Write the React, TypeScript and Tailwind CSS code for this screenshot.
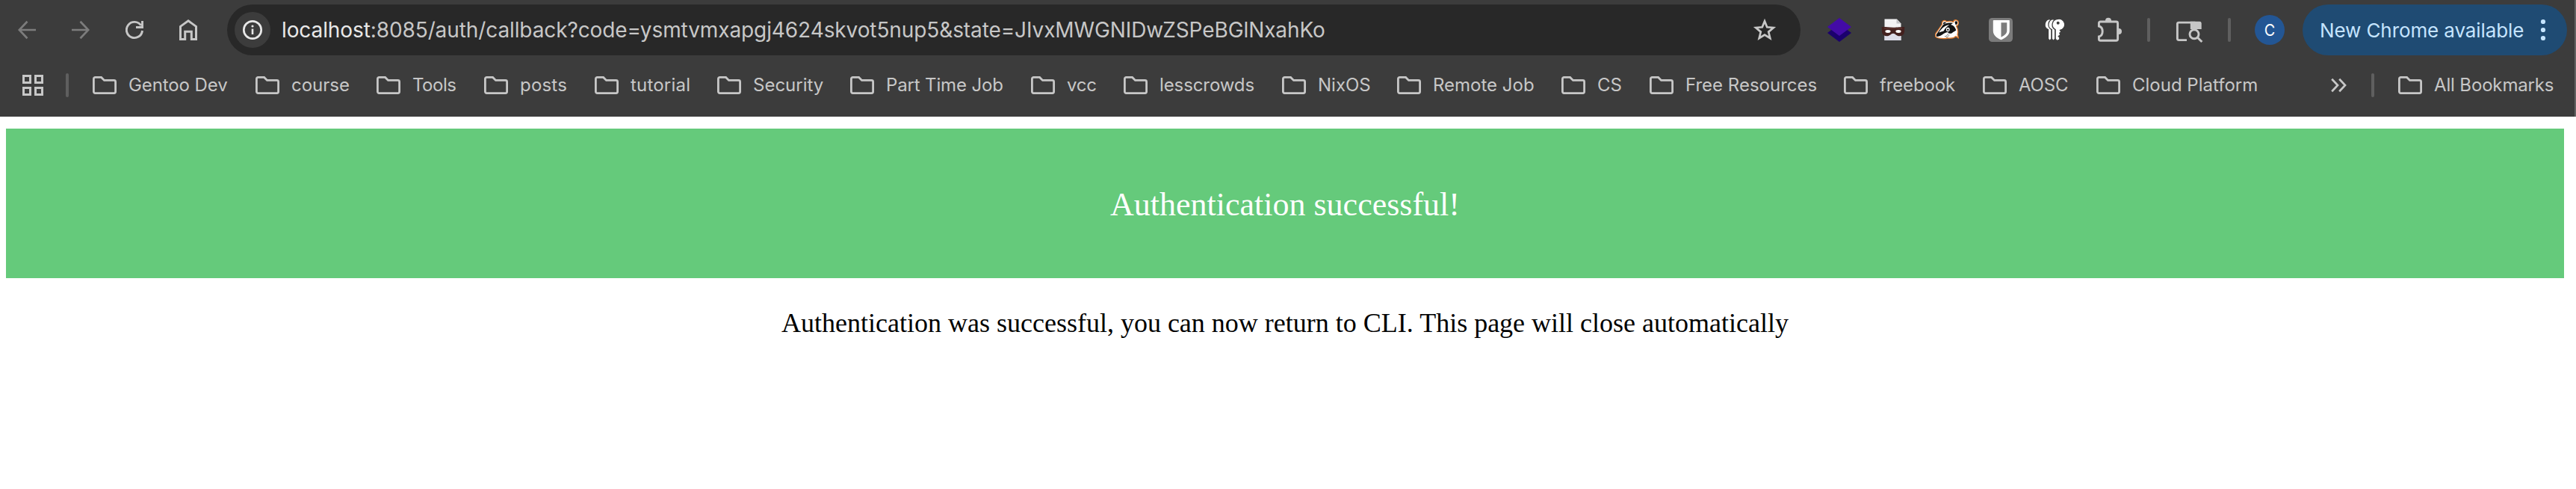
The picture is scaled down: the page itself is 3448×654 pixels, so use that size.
import type { ReactNode } from 'react'

const bookmarks = [
  { label: 'Gentoo Dev', box: 'w-[218px] tracking-[-0.1px]' },
  { label: 'course', box: 'w-[162px]' },
  { label: 'Tools', box: 'w-[144px] tracking-[-0.5px]' },
  { label: 'posts', box: 'w-[148px] tracking-[0.2px]' },
  { label: 'tutorial', box: 'w-[164px] tracking-[0.2px]' },
  { label: 'Security', box: 'w-[178px]' },
  { label: 'Part Time Job', box: 'w-[242px] tracking-[-0.15px]' },
  { label: 'vcc', box: 'w-[124px] tracking-[-0.3px]' },
  { label: 'lesscrowds', box: 'w-[212px] tracking-[-0.1px]' },
  { label: 'NixOS', box: 'w-[154px]' },
  { label: 'Remote Job', box: 'w-[220px]' },
  { label: 'CS', box: 'w-[118px]' },
  { label: 'Free Resources', box: 'w-[260px]' },
  { label: 'freebook', box: 'w-[186px] tracking-[-0.15px]' },
  { label: 'AOSC', box: 'w-[152px] tracking-[-0.2px]' },
  { label: 'Cloud Platform', box: 'w-[314px]' },
]

function Icon({ w = 32, h = 32, className = '', children }: { w?: number; h?: number; className?: string; children: ReactNode }) {
  return (
    <svg width={w} height={h} viewBox={`0 0 ${w} ${h}`} fill="none" className={`shrink-0 ${className}`}>
      {children}
    </svg>
  )
}

function Separator({ className = '' }: { className?: string }) {
  return <div className={`h-8 w-1 shrink-0 rounded-full bg-[#5f5f5f] ${className}`} />
}

function Folder() {
  return (
    <Icon w={32} h={24} className="mr-4 text-[#c7c7c7]">
      <path
        d="M1.4 3.4a2 2 0 0 1 2-2h8.2l3.9 4h13.1a2 2 0 0 1 2 2v13.2a2 2 0 0 1-2 2H3.4a2 2 0 0 1-2-2z"
        stroke="currentColor"
        strokeWidth="2.8"
      />
    </Icon>
  )
}

function Navigation() {
  return (
    <div className="flex shrink-0 items-center gap-12 text-[#c7c7c7]">
      <Icon w={24} h={32} className="text-[#7c7c7c]">
        <path d="M24 16H2M12.5 4.8 1.8 16l10.7 11.2" stroke="currentColor" strokeWidth="2.7" />
      </Icon>
      <Icon w={24} h={32} className="text-[#7c7c7c]">
        <path d="M0 16h22M11.5 4.8 22.2 16 11.5 27.2" stroke="currentColor" strokeWidth="2.7" />
      </Icon>
      <Icon w={24} h={32}>
        <path d="M22.5 17A10.6 10.6 0 1 1 20.7 10M22.5 4v8.5H14" stroke="currentColor" strokeWidth="2.9" />
      </Icon>
      <Icon w={24} h={32}>
        <path d="M1.5 28.5V11.4L12 3.8l10.5 7.6v17.1h-6.2V18.2H7.7v10.3z" stroke="currentColor" strokeWidth="3" />
      </Icon>
    </div>
  )
}

function AddressBar() {
  return (
    <div className="ml-10 flex h-[68px] w-[2106px] shrink-0 items-center rounded-full bg-[#282828] pr-8 pl-[10px]">
      <div className="flex size-12 shrink-0 items-center justify-center rounded-full bg-[#3c3c3c]">
        <Icon w={28} h={28} className="text-[#e8e8e8]">
          <circle cx="14" cy="14" r="11.7" stroke="currentColor" strokeWidth="2.7" />
          <path d="M14 12.6V20" stroke="currentColor" strokeWidth="2.6" />
          <circle cx="14" cy="9" r="1.6" fill="currentColor" />
        </Icon>
      </div>
      <div className="ml-[15px] flex-1 text-[28px] leading-10 tracking-[-0.1px] whitespace-nowrap text-[#c7c7c7]">
        <span className="text-[#e8e8e8]">localhost</span>
        :8085/auth/callback?code=ysmtvmxapgj4624skvot5nup5&amp;state=JIvxMWGNIDwZSPeBGlNxahKo
      </div>
      <Icon className="text-[#c7c7c7]">
        <path
          d="m16 4.3 3.2 8 8.6.7-6.6 5.6 2.1 8.4-7.3-4.5L8.7 27l2.1-8.4L4.2 13l8.6-.7z"
          stroke="currentColor"
          strokeWidth="2.7"
        />
      </Icon>
    </div>
  )
}

function Extensions() {
  return (
    <div className="ml-9 flex shrink-0 items-center gap-10">
      <Icon>
        <path d="M0 20 16 8l16 12-16 12z" fill="#1b016d" />
        <path d="M0 12 16 0l16 12-16 12z" fill="#430ba7" />
      </Icon>
      <Icon>
        <path d="M4.5 1.5H21L26.5 7.5V30H4.5z" fill="#f3f3f5" />
        <path d="M4.5 20h22v10h-22z" fill="#dcdce8" />
        <path d="M20.5 1.5v6h6z" fill="#c5c5c9" />
        <path d="M.5 12.2c4-.7 8 .5 15.500.5s11.500-1.200 15.500-.5c-.8 2.300 0 4.500-.6 7-.6 3.500-3.500 5.300-7.400 5-3.500-.2-4.500-3.500-7.500-3.500s-4 3.300-7.500 3.500c-3.900.3-6.800-1.500-7.400-5-.5-2.500.2-4.700-.6-7z" fill="#43211f" />
        <path d="M4 13.700c5 .6 19 .6 24 0" stroke="#6a3c38" strokeWidth="1" />
        <ellipse cx="9" cy="18" rx="3.6" ry="1.9" fill="#fff" />
        <ellipse cx="23" cy="18" rx="3.6" ry="1.9" fill="#fff" />
      </Icon>
      <Icon>
        <path
          d="M9.500 8.500C8.500 4 13 2 15.500 5c3-1 6.500-.8 9 .5C25.500 1.500 31.500 2 31.300 6.500c0 2.500-1.200 3.800-2.800 4 2 4 2.800 8 1.600 11.500l1.300 5-3.400-2.500c-2.500 2.500-7 3-11 2.500-5 1-12 .5-15-1C-.5 24.500 0 21 3 18z"
          fill="#fff"
          stroke="#e0792b"
          strokeWidth="1.3"
          strokeLinejoin="round"
        />
        <path d="M11 8.500c-.7-3 2.500-4 4-2zM26.500 5.500c1.500-2.500 4-1 3.500 1.500-.3 1.500-1.500 2.300-2.500 2z" fill="#111" />
        <path d="M10.500 9.500c4-3 9-3.500 13.500-2.500l-3 2c3.500.5 6 3 7.300 7.500-2 2-3.500 1.500-5.300 3.500-2 1.500-4.500 1-6-1-3 .5-5 1.500-7.500 3.500-2 1.500-5 2.500-7 2.500-1.500-1-1-3 .5-4.500z" fill="#141414" />
        <path d="M5 19.500c4-5.500 8-9.500 14.500-10.500-3.500 2-6 5-8 8.500-2.500.5-4.500 1.200-6.500 2z" fill="#fff" />
        <path d="M13 24.500c2 .5 3.500-1 4.500-3.500M15 26c2-.5 3.500-2 4-3.500" stroke="#555" strokeWidth=".8" />
        <ellipse cx="17.3" cy="15.500" rx="2.4" ry="2.7" fill="#fff" />
        <circle cx="17.3" cy="15.800" r="1.2" fill="#111" />
      </Icon>
      <Icon>
        <rect width="32" height="32" rx="4.5" fill="#7b7b7b" />
        <path d="M6.700 3h20.600c.3 0 .5.200.5.500v13.500c0 6-5 9.500-11.300 12.200C10 26.500 5.800 23 5.800 17V3.500c0-.3.300-.5.900-.5z" fill="#fff" />
        <path d="M16.500 6.300h7.800V17c0 4-3.500 6.500-7.800 8.700z" fill="#7b7b7b" />
      </Icon>
      <Icon>
        <g fill="#fff" stroke="#3c3c3c" strokeWidth="1.3">
          <path d="M10.500 1.500a7.300 7.300 0 0 0-3 14V28l2 2.500L12 28V15z" />
          <path d="M15.300 1.500a7.300 7.300 0 0 0-3 14V28l2 2.500L16.800 28V15z" />
          <path d="M20.500 1.300a7.600 7.600 0 0 0-3.400 14.300V28l2.300 2.600 3.400-1.900v-2.800l-1.500-1.400 2.600-2-1.100-2.200 2.100-1.600-1.400-2.300A7.600 7.600 0 0 0 20.500 1.300z" />
        </g>
        <circle cx="20.700" cy="6.800" r="2" fill="#3c3c3c" />
      </Icon>
      <Icon w={36} h={36} className="text-[#c7c7c7]">
        <path
          d="M3.400 13V9a2 2 0 0 1 2-2h21.200a2 2 0 0 1 2 2v21.200a2 2 0 0 1-2 2H5.400a2 2 0 0 1-2-2V27c6.400-1.500 6.400-12.500 0-14z"
          stroke="currentColor"
          strokeWidth="2.9"
        />
        <path d="M12 7V5.700a4 4 0 0 1 8 0V7zM28.500 16H30a4 4 0 0 1 0 8h-1.500z" fill="currentColor" />
      </Icon>
    </div>
  )
}

function ToolbarEnd() {
  return (
    <div className="ml-8 flex shrink-0 items-center gap-8">
      <Separator />
      <Icon w={40} h={36} className="text-[#c7c7c7]">
        <path d="M17 31.600H6.400a2 2 0 0 1-2-2V10a2 2 0 0 1 2-1.900h22" stroke="currentColor" strokeWidth="2.9" />
        <path d="M21.800 6.650h12.400A2.500 2.500 0 0 1 36.700 9v8H21.800z" fill="currentColor" />
        <circle cx="27" cy="23.800" r="6" stroke="currentColor" strokeWidth="2.9" />
        <path d="m31.500 28.200 5.800 5.800" stroke="currentColor" strokeWidth="3" />
      </Icon>
      <Separator />
      <div className="flex size-10 items-center justify-center rounded-full bg-[#235694] text-[22px] leading-none text-white">
        <span className="scale-x-90">C</span>
      </div>
      <div className="-ml-2 flex h-[68px] w-[354px] items-center rounded-full bg-[#1f4b73] pl-[23px] text-[26px] leading-8 tracking-[-0.1px] whitespace-nowrap text-[#c5e4ff]">
        <span className="w-[292px] pt-px">New Chrome available</span>
        <Icon w={14} h={32}>
          <g fill="currentColor">
            <circle cx="7" cy="5" r="3.1" />
            <circle cx="7" cy="16" r="3.1" />
            <circle cx="7" cy="27" r="3.1" />
          </g>
        </Icon>
      </div>
    </div>
  )
}

function BookmarksBar() {
  return (
    <div className="flex h-[68px] items-center pl-[30px] text-[24px] leading-8 whitespace-nowrap text-[#c7c7c7]">
      <Icon w={28} h={28}>
        <g stroke="currentColor" strokeWidth="3">
          <rect x="1.500" y="1.500" width="9" height="9" />
          <rect x="17.500" y="1.500" width="9" height="9" />
          <rect x="1.500" y="17.500" width="9" height="9" />
          <rect x="17.500" y="17.500" width="9" height="9" />
        </g>
      </Icon>
      <Separator className="mr-8 ml-[30px]" />
      {bookmarks.map(({ label, box }) => (
        <div key={label} className={`flex shrink-0 items-center ${box}`}>
          <Folder />
          {label}
        </div>
      ))}
      <Icon w={22} h={20}>
        <path d="m1.200 1.800 7.800 8.200-7.800 8.200M11.200 1.800 19 10l-7.800 8.200" stroke="currentColor" strokeWidth="2.7" />
      </Icon>
      <Separator className="mr-8 ml-8" />
      <div className="flex items-center tracking-[-0.15px]">
        <Folder />
        All Bookmarks
      </div>
    </div>
  )
}

export default function App() {
  return (
    <div className="h-[654px] w-[3448px] overflow-hidden bg-white">
      <header className="h-[156px] border-r-2 border-[#626262] bg-[#3c3c3c] font-[Inter,sans-serif]">
        <div className="flex h-20 items-center pl-6">
          <Navigation />
          <AddressBar />
          <Extensions />
          <ToolbarEnd />
        </div>
        <BookmarksBar />
      </header>
      <main className="mt-4 mr-4 ml-2 text-center font-['Liberation_Serif',serif]">
        <h1 className="flex h-[200px] items-center justify-center bg-[#65ca7b] pt-[3px] text-[44px] leading-[50px] text-white">
          Authentication successful!
        </h1>
        <p className="mt-10 text-[36px] leading-10 text-black">
          Authentication was successful, you can now return to CLI. This page will close automatically
        </p>
      </main>
    </div>
  )
}
